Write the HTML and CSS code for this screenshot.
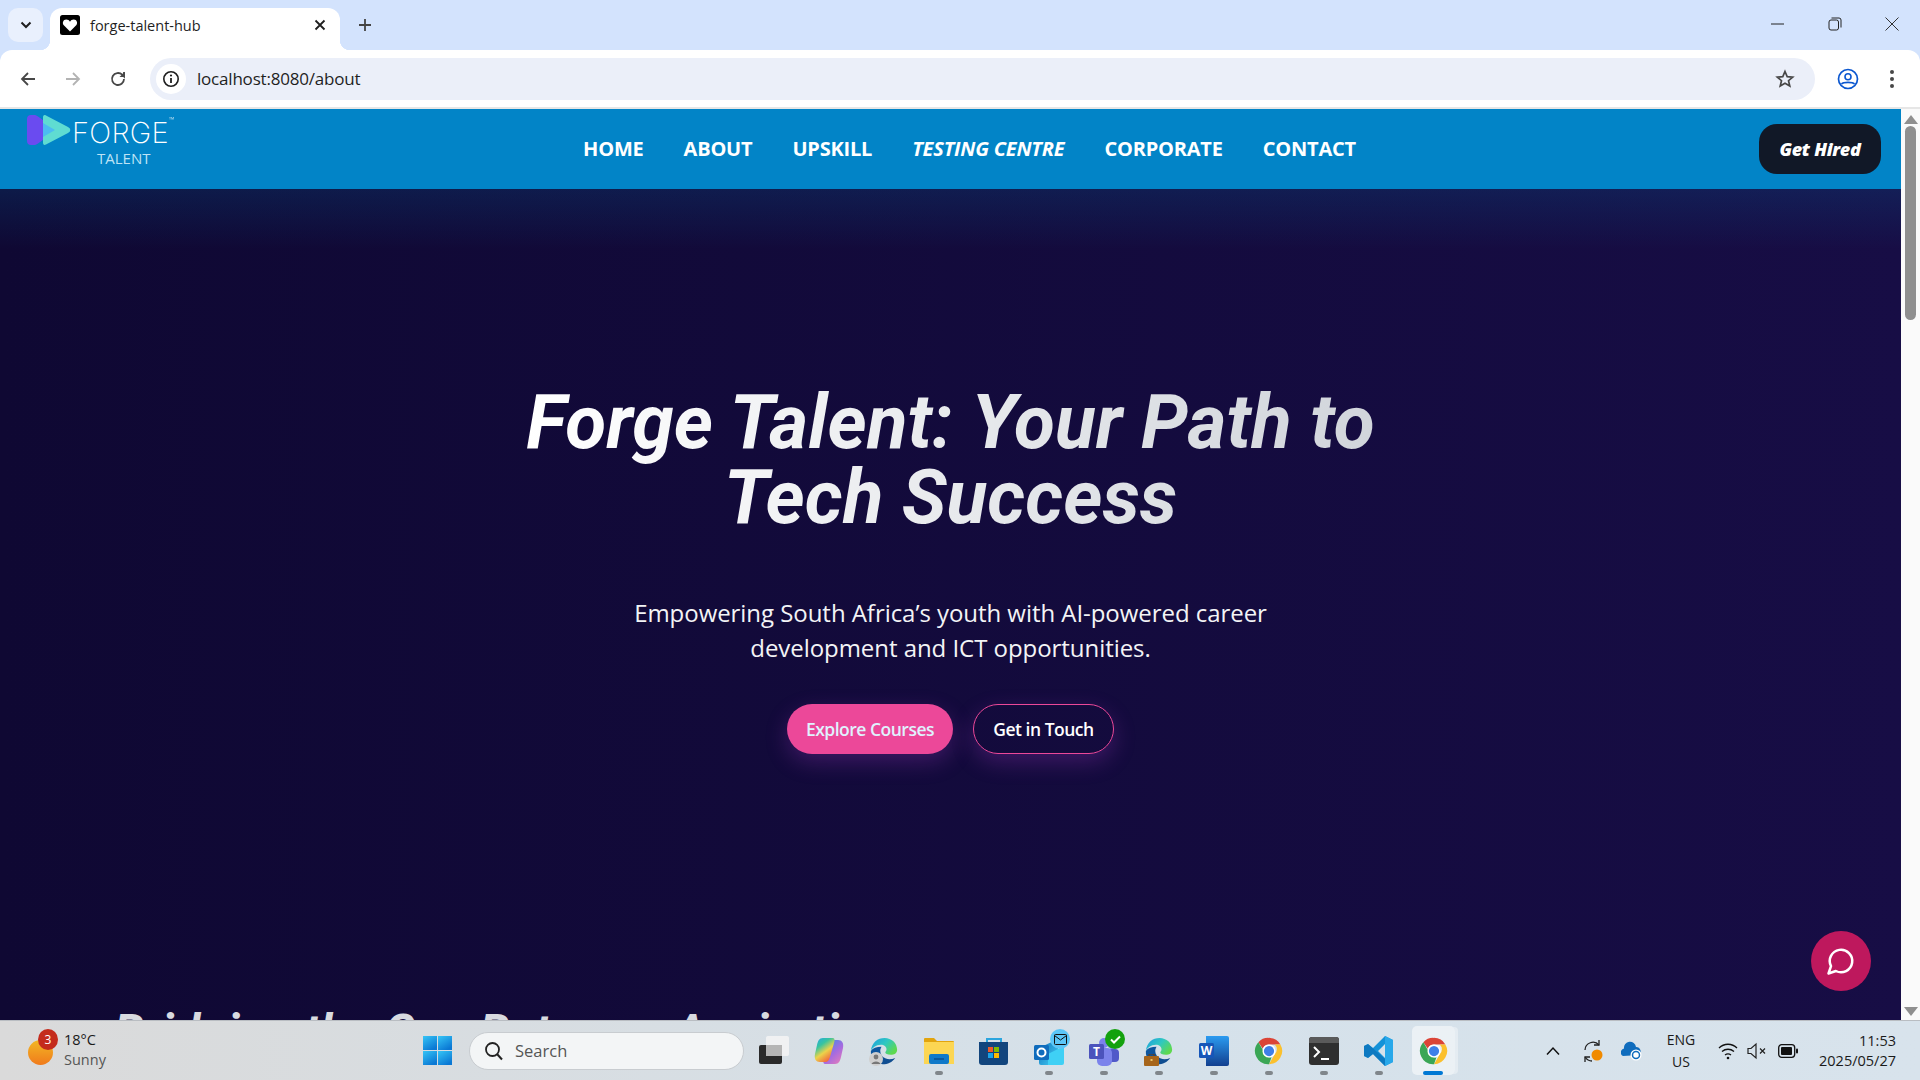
FILE: index.html
```html
<!DOCTYPE html>
<html lang="en">
<head>
    <meta charset="UTF-8">
    <meta name="viewport" content="width=device-width, initial-scale=1.0">
    <title>forge-talent-hub</title>
    <link rel="stylesheet" href="styles.css">
</head>
<body>
    <svg class="defs" width="0" height="0">
        <defs>
            <linearGradient id="edgeBlue" x1="0" y1="0" x2="1" y2="1"><stop offset="0" stop-color="#0c59a4"/><stop offset="1" stop-color="#114a8b"/></linearGradient>
            <linearGradient id="edgeTop" x1="0" y1="0" x2="1" y2="0.6"><stop offset="0" stop-color="#1b9de2"/><stop offset="0.55" stop-color="#30c8c0"/><stop offset="1" stop-color="#5ed94f"/></linearGradient>
            <linearGradient id="copilotA" x1="0" y1="0" x2="0.6" y2="1"><stop offset="0" stop-color="#25a5e8"/><stop offset="0.35" stop-color="#37c4a0"/><stop offset="0.65" stop-color="#ecd34a"/><stop offset="1" stop-color="#f2683c"/></linearGradient>
            <linearGradient id="copilotB" x1="0.2" y1="0" x2="1" y2="1"><stop offset="0" stop-color="#3b8ee8"/><stop offset="0.5" stop-color="#a56be0"/><stop offset="1" stop-color="#ef7fb4"/></linearGradient>
            <linearGradient id="winBlue" x1="0" y1="0" x2="0.6" y2="1"><stop offset="0" stop-color="#36c5f6"/><stop offset="1" stop-color="#0a78d4"/></linearGradient>
            <linearGradient id="outlookBlue" x1="0" y1="0" x2="1" y2="1"><stop offset="0" stop-color="#0c6ab8"/><stop offset="1" stop-color="#45d2f6"/></linearGradient>
            <linearGradient id="wordBlue" x1="0" y1="0" x2="0" y2="1"><stop offset="0" stop-color="#2b9bf0"/><stop offset="1" stop-color="#123f8f"/></linearGradient>
            <symbol id="chromeIcon" viewBox="0 0 48 48">
                <path d="M24 3a21 21 0 0 1 18.2 10.500H24a10.500 10.500 0 0 0-9.900 7L7 10A21 21 0 0 1 24 3z" fill="#db4437"/>
                <path d="M42.200 13.500A21 21 0 0 1 24 45l9.100-15.800a10.500 10.500 0 0 0 0-15.700z" fill="#fbc02d"/>
                <path d="M24 45A21 21 0 0 1 7 10l9 15.600a10.500 10.500 0 0 0 12 8.500z" fill="#3aa655"/>
                <circle cx="24" cy="24" r="10.500" fill="#fff"/>
                <circle cx="24" cy="24" r="8.200" fill="#3f7fe8"/>
            </symbol>
            <symbol id="edgeIcon" viewBox="0 0 48 48">
                <path d="M3 24C4 10 14 3 25 3c11 0 20 8 20 19 0 6-5 8-10 8-6 0-9-2-9-4 0-1 2-2 2-5 0-4-4-7-9-7-8 0-14 5-16 10z" fill="url(#edgeTop)"/>
                <path d="M3 24c-1 12 8 21 19 21 8 0 15-3 20-10-5 2-10 3-15 1-6-2-9-7-9-12 0-3 1-5 2-7-8 0-14 2-17 7z" fill="url(#edgeBlue)"/>
            </symbol>
        </defs>
    </svg>

    <!-- browser top -->
    <div class="tabstrip">
        <div class="tab-search">
            <svg width="14" height="14" viewBox="0 0 14 14"><path d="M2.500 4.500 7 9l4.500-4.500" fill="none" stroke="#1f1f1f" stroke-width="2"/></svg>
        </div>
        <div class="tab">
            <svg class="favicon" width="20" height="20" viewBox="0 0 20 20"><rect width="20" height="20" rx="2.500" fill="#000"/><path d="M10 16.500 3.800 10.300C2 8.300 3 4.500 6.300 4.500c1.600 0 2.900.9 3.700 2.200.8-1.300 2.100-2.200 3.700-2.200 3.300 0 4.300 3.800 2.500 5.800z" fill="#fff"/></svg>
            <span class="tab-title">forge-talent-hub</span>
            <svg class="tab-close" width="12" height="12" viewBox="0 0 12 12"><path d="M1.500 1.500l9 9m0-9-9 9" stroke="#1f1f1f" stroke-width="1.800"/></svg>
        </div>
        <svg class="tab-new" width="14" height="14" viewBox="0 0 14 14"><path d="M7 1v12M1 7h12" stroke="#444" stroke-width="1.800"/></svg>
        <div class="caption">
            <svg width="14" height="14" viewBox="0 0 14 14"><path d="M0 7h13" stroke="#222" stroke-width="1"/></svg>
            <svg width="14" height="14" viewBox="0 0 14 14"><rect x="1" y="3" width="9.500" height="10" rx="2" fill="none" stroke="#222"/><path d="M3.500 1h7.500a2 2 0 0 1 2 2v7.500" fill="none" stroke="#222"/></svg>
            <svg width="14" height="14" viewBox="0 0 14 14"><path d="M.5.500l13 13m0-13-13 13" stroke="#333" stroke-width="1"/></svg>
        </div>
    </div>
    <div class="toolbar">
        <svg class="tool" width="18" height="18" viewBox="0 0 18 18"><path d="M16 9H3M9 3 3 9l6 6" fill="none" stroke="#474747" stroke-width="1.800"/></svg>
        <svg class="tool" width="18" height="18" viewBox="0 0 18 18"><path d="M2 9h13M9 3l6 6-6 6" fill="none" stroke="#b3b3b3" stroke-width="1.800"/></svg>
        <svg class="tool" width="18" height="18" viewBox="0 0 18 18"><path d="M15 9a6 6 0 1 1-1.800-4.300L15 6.500V2" fill="none" stroke="#474747" stroke-width="1.800"/><path d="M15.800 7H10.500l5.300-5.300z" fill="#474747"/></svg>
        <div class="omnibox">
            <span class="site-info">
                <svg width="18" height="18" viewBox="0 0 18 18"><circle cx="9" cy="9" r="7.200" fill="none" stroke="#1f1f1f" stroke-width="1.600"/><path d="M9 8v5" stroke="#1f1f1f" stroke-width="1.800"/><circle cx="9" cy="5.500" r="1.100" fill="#1f1f1f"/></svg>
            </span>
            <span class="url">localhost:8080/about</span>
            <svg class="star" width="20" height="20" viewBox="0 0 20 20"><path d="M10 2.500l2.200 5.100 5.500.5-4.200 3.600 1.300 5.400L10 14.300l-4.800 2.800 1.300-5.400L2.300 8.100l5.500-.5z" fill="none" stroke="#474747" stroke-width="1.700"/></svg>
        </div>
        <svg class="profile" width="22" height="22" viewBox="0 0 22 22"><circle cx="11" cy="11" r="9.500" fill="none" stroke="#0b57d0" stroke-width="1.700"/><circle cx="11" cy="8.800" r="3" fill="none" stroke="#0b57d0" stroke-width="1.600"/><path d="M4.500 16c2-2.200 11-2.200 13 0" fill="none" stroke="#0b57d0" stroke-width="1.600"/></svg>
        <div class="kebab"><i></i><i></i><i></i></div>
    </div>

    <div class="viewport">
        <div class="page">
            <header class="site-nav">
                <a class="logo">
                    <span class="logo-top">
                        <svg class="logo-mark" width="44" height="30" viewBox="0 0 44 30"><path d="M4 0h3c1.500 0 3 .6 4 1.500l14 10c3 2 3 5 0 7L11 28.500c-1 .9-2.500 1.500-4 1.500H4c-2.500 0-4-1.500-4-4V4c0-2.500 1.500-4 4-4z" fill="#6a4bf0"/><path d="M19 .5c-2-1-3 0-3 2v25c0 2 1 3 3 2l22-11.500c3-1.500 3-4.500 0-6z" fill="#5fdcd2"/><path d="M16 8l12 7-12 7z" fill="#4cbcf2"/></svg>
                        <span class="logo-word">FORGE</span>
                        <span class="logo-tm">™</span>
                    </span>
                    <span class="logo-sub">TALENT</span>
                </a>
                <nav class="nav-links">
                    <a>HOME</a>
                    <a>ABOUT</a>
                    <a>UPSKILL</a>
                    <a class="nav-em">TESTING CENTRE</a>
                    <a>CORPORATE</a>
                    <a>CONTACT</a>
                </nav>
                <a class="btn-hired">Get Hired</a>
            </header>

            <section class="hero">
                <h1 class="hero-title">Forge Talent: Your Path to<br>Tech Success</h1>
                <p class="hero-sub">Empowering South Africa’s youth with AI-powered career development and ICT opportunities.</p>
                <div class="hero-actions">
                    <a class="btn btn-pink">Explore Courses</a>
                    <a class="btn btn-outline">Get in Touch</a>
                </div>
            </section>

            <section class="bridge">
                <h2 class="bridge-title">Bridging the Gap Between Aspirations</h2>
            </section>

            <button class="chat-btn">
                <svg width="30" height="30" viewBox="0 0 24 24"><path d="M7.900 20A9 9 0 1 0 4 16.100L2 22z" fill="none" stroke="#fff" stroke-width="2" stroke-linejoin="round"/></svg>
            </button>
        </div>
        <div class="scrollbar">
            <span class="arrow-up"></span>
            <span class="thumb"></span>
            <span class="arrow-down"></span>
        </div>
    </div>

    <!-- windows taskbar -->
    <footer class="taskbar">
        <div class="weather">
            <span class="sun"><b>3</b></span>
            <span class="weather-text"><span>18°C</span><span class="muted">Sunny</span></span>
        </div>
        <svg class="win" width="29" height="29" viewBox="0 0 29 29"><g fill="url(#winBlue)"><rect width="14" height="14"/><rect x="15" width="14" height="14"/><rect y="15" width="14" height="14"/><rect x="15" y="15" width="14" height="14"/></g></svg>
        <div class="search">
            <svg width="20" height="20" viewBox="0 0 20 20"><circle cx="8.500" cy="8.500" r="6.500" fill="none" stroke="#222" stroke-width="1.800"/><path d="M13 13l5 5.500" stroke="#222" stroke-width="2"/></svg>
            <span>Search</span>
        </div>
        <div class="apps">
            <div class="app">
                <svg width="30" height="30" viewBox="0 0 30 30"><rect x="0" y="9" width="23" height="19" rx="2" fill="#2a2a2a"/><rect x="7" y="0" width="23" height="20" rx="2" fill="#f5f5f5" opacity=".85"/><rect x="7" y="9" width="16" height="11" fill="#b5b5b5"/></svg>
            </div>
            <div class="app">
                <svg width="30" height="30" viewBox="0 0 30 30"><path d="M21 28c4 0 5-3 6-7l2-9c1-5-1-8-5-8h-5c-3 0-4 2-5 5l-4 14c-1 3-1 5 2 5z" fill="url(#copilotB)"/><path d="M9 2C5 2 4 5 3 9l-2 9c-1 5 1 8 5 8h5c3 0 4-2 5-5l4-14c1-3 1-5-2-5z" fill="url(#copilotA)"/></svg>
            </div>
            <div class="app">
                <svg width="30" height="30"><use href="#edgeIcon"/></svg>
                <svg class="app-mini" width="14" height="14" viewBox="0 0 14 14"><circle cx="7" cy="7" r="7" fill="#cfcfcf"/><circle cx="7" cy="5" r="2.400" fill="#777"/><path d="M2.500 12c1-3.500 8-3.500 9 0z" fill="#777"/></svg>
            </div>
            <div class="app has-dot">
                <svg width="30" height="30" viewBox="0 0 30 30"><path d="M0 3a1 1 0 0 1 1-1h9l3 3h16a1 1 0 0 1 1 1v3H0z" fill="#e2a40e"/><path d="M0 6h30v22H0z" fill="#fcd653"/><rect x="5" y="18" width="20" height="10" rx="2" fill="#1079c9"/><path d="M10 23h10" stroke="#0a4f8f" stroke-width="1.500"/></svg>
            </div>
            <div class="app">
                <svg width="30" height="30" viewBox="0 0 30 30"><path d="M8 6V3h14v3" fill="none" stroke="#2ca5de" stroke-width="2"/><path d="M0 6h29v20a3 3 0 0 1-3 3H3a3 3 0 0 1-3-3z" fill="#12457d"/><rect x="9" y="11" width="5" height="5" fill="#f05a28"/><rect x="15" y="11" width="5" height="5" fill="#7fba00"/><rect x="9" y="17" width="5" height="5" fill="#1aa3e8"/><rect x="15" y="17" width="5" height="5" fill="#ffb900"/></svg>
            </div>
            <div class="app has-dot">
                <svg width="30" height="30" viewBox="0 0 30 30"><path d="M5 12 24 3v26H7a2 2 0 0 1-2-2z" fill="url(#outlookBlue)"/><path d="M14 18l16-8v17a2 2 0 0 1-2 2H14z" fill="#3fd0f5"/><rect x="0" y="9" width="15" height="15" rx="1.500" fill="#0f6cbd"/><circle cx="7.500" cy="16.500" r="4" fill="none" stroke="#fff" stroke-width="2"/></svg>
                <span class="app-badge badge-mail">
                    <svg width="13" height="11" viewBox="0 0 13 11"><rect x=".5" y=".5" width="12" height="10" rx="1" fill="none" stroke="#111"/><path d="M.5 1.500 6.500 6l6-4.500" fill="none" stroke="#111"/></svg>
                </span>
            </div>
            <div class="app has-dot">
                <svg width="30" height="30" viewBox="0 0 30 30"><circle cx="23" cy="9" r="4" fill="#7b83eb"/><rect x="19" y="13" width="11" height="13" rx="4" fill="#5059c9"/><circle cx="15" cy="7" r="5" fill="#7b83eb"/><rect x="8" y="12" width="15" height="18" rx="5" fill="#7b83eb"/><rect x="0" y="8" width="15" height="15" rx="1.500" fill="#4b53bc"/><text class="app-letter" x="7.500" y="20">T</text></svg>
                <span class="app-badge badge-ok">
                    <svg width="11" height="9" viewBox="0 0 11 9"><path d="M1 4.500l3 3 6-6" fill="none" stroke="#fff" stroke-width="2"/></svg>
                </span>
            </div>
            <div class="app has-dot">
                <svg width="30" height="30"><use href="#edgeIcon"/></svg>
                <svg class="app-mini" width="15" height="12" viewBox="0 0 15 12"><rect y="2" width="15" height="10" rx="1" fill="#a6651b"/><path d="M5 2V0h5v2" fill="none" stroke="#6b3f10"/><rect x="6.500" y="5" width="2" height="2" fill="#e9c46a"/></svg>
            </div>
            <div class="app has-dot">
                <svg width="30" height="30" viewBox="0 0 30 30"><path d="M7 0h21a2 2 0 0 1 2 2v26a2 2 0 0 1-2 2H7z" fill="url(#wordBlue)"/><rect x="0" y="7" width="15" height="15" rx="1.500" fill="#1656b8"/><text class="app-letter" x="7.500" y="19">W</text></svg>
            </div>
            <div class="app has-dot">
                <svg width="30" height="30"><use href="#chromeIcon"/></svg>
            </div>
            <div class="app has-dot">
                <svg width="30" height="30" viewBox="0 0 30 30"><rect y="1" width="30" height="28" rx="3" fill="#2f2f2f"/><path d="M0 4a3 3 0 0 1 3-3h24a3 3 0 0 1 3 3v3H0z" fill="#5a5a5a"/><path d="M5 11l5 5-5 5" fill="none" stroke="#fff" stroke-width="2"/><path d="M12 23h8" stroke="#fff" stroke-width="2"/></svg>
            </div>
            <div class="app has-dot">
                <svg width="30" height="30" viewBox="0 0 30 30"><path d="M21 0l8 4v22l-8 4L9 18l-5 4-4-2v-10l4-2 5 4zm0 8-7 7 7 7z" fill="#1492d8"/><path d="M21 0l8 4v22l-8 4z" fill="#28a8ea"/><path d="M0 10l4-2 17 15v7L9 18l-5 4-4-2z" fill="#0a6fb8" opacity=".7"/></svg>
            </div>
            <div class="app app-active">
                <svg width="30" height="30"><use href="#chromeIcon"/></svg>
            </div>
        </div>
        <div class="tray">
            <svg width="16" height="10" viewBox="0 0 16 10"><path d="M2 8.500 8 2l6 6.500" fill="none" stroke="#111" stroke-width="1.500"/></svg>
            <svg class="tray-sync" width="22" height="26" viewBox="0 0 22 26"><path d="M3 12a8 8 0 0 1 14-5M19 14" fill="none" stroke="#222" stroke-width="1.300"/><path d="M17 2v5h-5M3 24v-5h5" fill="none" stroke="#222" stroke-width="1.300"/><path d="M3 19c2 3 5 4 7 4" fill="none" stroke="#222" stroke-width="1.300"/><circle cx="15" cy="17" r="5.500" fill="#f08a00"/></svg>
            <svg class="tray-cloud" width="22" height="20" viewBox="0 0 22 20"><path d="M2 15a4 4 0 0 1 1-7.500A6 6 0 0 1 15 6a4.500 4.500 0 0 1 3 8z" fill="#0f6cbd"/><circle cx="15" cy="14" r="5.500" fill="#fff"/><circle cx="15" cy="14" r="3.500" fill="none" stroke="#0f6cbd" stroke-width="1.500"/></svg>
            <div class="lang"><span>ENG</span><span>US</span></div>
            <svg class="tray-wifi" width="20" height="18" viewBox="0 0 20 18"><path d="M1 6c5-5 13-5 18 0M4 9.500c3.500-3 8.500-3 12 0M7 13c2-1.500 4-1.500 6 0" fill="none" stroke="#111" stroke-width="1.300"/><circle cx="10" cy="16" r="1.300" fill="#111"/></svg>
            <svg class="tray-vol" width="20" height="18" viewBox="0 0 20 18"><path d="M1 6.500h3L9 2v14l-5-4.500H1z" fill="none" stroke="#222" stroke-width="1.200"/><path d="M13 6.500l5 5m0-5-5 5" stroke="#222" stroke-width="1.200"/></svg>
            <svg class="tray-bat" width="20" height="14" viewBox="0 0 20 14"><rect x=".7" y=".7" width="16" height="12.600" rx="3" fill="none" stroke="#111" stroke-width="1.300"/><rect x="3" y="3" width="11" height="8" rx="1" fill="#111"/><rect x="18" y="4.500" width="2" height="5" rx="1" fill="#111"/></svg>
            <div class="clock"><span>11:53</span><span>2025/05/27</span></div>
        </div>
    </footer>
</body>
</html>
```

FILE: styles.css
```css
* {
    box-sizing: border-box;
}

html, body {
    margin: 0;
    padding: 0;
    height: 100%;
    overflow: hidden;
}

body {
    width: 1920px;
    height: 1080px;
    display: flex;
    flex-direction: column;
    font-family: "Open Sans", "Noto Sans", sans-serif;
    background-color: #d3e3fd;
}

.defs {
    position: absolute;
}

/* browser top */
.tabstrip {
    height: 50px;
    flex: none;
    display: flex;
    align-items: flex-end;
    background-color: #d3e3fd;
    padding-left: 8px;
}

.tab-search {
    width: 35px;
    height: 34px;
    margin-bottom: 8px;
    border-radius: 10px;
    background-color: #e9f0fd;
    display: flex;
    align-items: center;
    justify-content: center;
}

.tab {
    position: relative;
    width: 290px;
    height: 42px;
    margin-left: 7px;
    padding: 0 14px 8px 10px;
    border-radius: 12px 12px 0 0;
    background-color: #fff;
    display: flex;
    align-items: center;
}

.tab::before, .tab::after {
    content: "";
    position: absolute;
    bottom: 0;
    width: 10px;
    height: 10px;
}

.tab::before {
    left: -10px;
    background: radial-gradient(circle at 0 0, transparent 10px, #fff 10.5px);
}

.tab::after {
    right: -10px;
    background: radial-gradient(circle at 100% 0, transparent 10px, #fff 10.5px);
}

.favicon {
    flex: none;
}

.tab-title {
    margin-left: 10px;
    font-size: 14.5px;
    color: #1f1f1f;
}

.tab-close {
    margin-left: auto;
}

.tab-new {
    margin: 0 0 18px 18px;
}

.caption {
    margin-left: auto;
    height: 50px;
    width: 149px;
    padding: 0 21px 2px 0;
    display: flex;
    align-items: center;
    justify-content: space-between;
}

.toolbar {
    height: 59px;
    flex: none;
    display: flex;
    align-items: center;
    padding: 0 14px 0 19px;
    background-color: #fff;
    border-radius: 12px 12px 0 0;
    border-bottom: 2px solid #e6e6e6;
}

.tool {
    flex: none;
    margin-right: 27px;
}

.omnibox {
    width: 1665px;
    height: 42px;
    margin-left: -4px;
    padding: 0 20px 0 6px;
    border-radius: 21px;
    background-color: #ebeff9;
    display: flex;
    align-items: center;
}

.site-info {
    width: 30px;
    height: 30px;
    border-radius: 50%;
    background-color: #fff;
    display: flex;
    align-items: center;
    justify-content: center;
}

.url {
    margin-left: 11px;
    font-size: 17px;
    letter-spacing: -0.2px;
    color: #1f1f1f;
}

.star {
    margin-left: auto;
}

.profile {
    margin-left: 22px;
}

.kebab {
    margin-left: 31px;
    display: flex;
    flex-direction: column;
    gap: 3px;
}

.kebab i {
    width: 4px;
    height: 4px;
    border-radius: 50%;
    background-color: #474747;
}

/* page */
.viewport {
    flex: 1;
    min-height: 0;
    display: flex;
}

.page {
    position: relative;
    flex: 1;
    min-width: 0;
    overflow: hidden;
    background: linear-gradient(to right, #0f0833, #170d45);
}

.scrollbar {
    width: 19px;
    flex: none;
    padding-top: 6px;
    background-color: #fafafa;
    display: flex;
    flex-direction: column;
    align-items: center;
}

.arrow-up, .arrow-down {
    width: 0;
    height: 0;
    border-left: 7px solid transparent;
    border-right: 7px solid transparent;
}

.arrow-up {
    border-bottom: 9px solid #8f8f8f;
}

.arrow-down {
    margin-top: auto;
    margin-bottom: 4px;
    border-top: 9px solid #8f8f8f;
}

.thumb {
    width: 11px;
    height: 194px;
    margin-top: 2px;
    border-radius: 6px;
    background-color: #8f8f8f;
}

.site-nav {
    height: 80px;
    padding: 0 20px;
    display: flex;
    align-items: center;
    justify-content: space-between;
    background-color: #0284c7;
}

.logo {
    width: 160px;
    height: 80px;
    padding: 6px 0 0 7px;
    display: flex;
    flex-direction: column;
    color: #fff;
}

.logo-top {
    display: flex;
    align-items: flex-start;
}

.logo-mark {
    flex: none;
}

.logo-word {
    margin: 3px 0 0 1px;
    font-family: Inter, sans-serif;
    font-weight: 200;
    font-size: 29px;
    line-height: 30px;
    letter-spacing: 0.3px;
}

.logo-tm {
    font-size: 7px;
    line-height: 10px;
    opacity: .7;
}

.logo-sub {
    margin: 0 0 0 70px;
    font-family: "Open Sans", sans-serif;
    font-size: 15px;
    line-height: 20px;
    color: #bde3f6;
}

.nav-links {
    display: flex;
    gap: 40px;
    margin-bottom: 2px;
}

.nav-links a {
    font-size: 20px;
    font-weight: 700;
    letter-spacing: -0.2px;
    color: #fff;
}

.nav-links .nav-em {
    font-style: italic;
}

.btn-hired {
    width: 122px;
    height: 50px;
    border-radius: 18px;
    display: flex;
    align-items: center;
    justify-content: center;
    background-color: #111827;
    color: #fff;
    font-size: 18px;
    font-weight: 800;
    font-style: italic;
    letter-spacing: -0.3px;
}

.hero {
    padding-top: 196px;
    height: 790px;
    display: flex;
    flex-direction: column;
    align-items: center;
    background: linear-gradient(to bottom, rgba(3, 110, 170, .18), rgba(3, 110, 170, 0) 60px);
}

.hero-title {
    margin: 0;
    font-family: Roboto, sans-serif;
    font-size: 75px;
    font-weight: 700;
    font-style: italic;
    line-height: 75px;
    text-align: center;
    background: linear-gradient(to right, #fff, #d1d5db);
    -webkit-background-clip: text;
    background-clip: text;
    color: transparent;
}

.hero-sub {
    width: 672px;
    margin: 60px 0 0;
    font-size: 24px;
    line-height: 35px;
    letter-spacing: -0.05px;
    text-align: center;
    color: #f3f4f6;
}

.hero-actions {
    margin-top: 39px;
    display: flex;
    gap: 20px;
}

.btn {
    height: 50px;
    border-radius: 25px;
    display: flex;
    align-items: center;
    justify-content: center;
    font-size: 17.5px;
    font-weight: 600;
    letter-spacing: -0.5px;
    box-shadow: 0 8px 22px rgba(168, 60, 200, .28);
}

.btn-pink {
    width: 166px;
    background-color: #ec4899;
    color: #e0f2fe;
}

.btn-outline {
    width: 141px;
    border: 1px solid #ec4899;
    color: #fff;
}

.bridge {
    padding-left: 114px;
}

.bridge-title {
    margin: 0;
    padding-top: 25px;
    font-family: Roboto, sans-serif;
    font-size: 48px;
    font-weight: 700;
    font-style: italic;
    line-height: 56px;
    letter-spacing: 0.2px;
    white-space: nowrap;
    color: #d8dae0;
}

.chat-btn {
    position: absolute;
    left: 1811px;
    top: 822px;
    width: 60px;
    height: 60px;
    padding: 0;
    border: 0;
    border-radius: 50%;
    background-color: #be185d;
    display: flex;
    align-items: center;
    justify-content: center;
}

/* taskbar */
.taskbar {
    position: relative;
    height: 60px;
    flex: none;
    display: flex;
    align-items: center;
    padding: 0 24px 0 28px;
    border-top: 1px solid #b9bdc2;
    background: linear-gradient(to right, #dadada, #d5e1ea 60%, #d8e3ec);
    color: #1a1a1a;
}

.weather {
    width: 395px;
    flex: none;
    display: flex;
    align-items: center;
    gap: 11px;
}

.sun {
    position: relative;
    width: 25px;
    height: 25px;
    margin-top: 4px;
    border-radius: 50%;
    background: linear-gradient(to bottom, #f2b824, #f07a1c);
}

.sun b {
    position: absolute;
    left: 10px;
    top: -11px;
    width: 20px;
    height: 21px;
    border-radius: 50%;
    background-color: #c42b1c;
    color: #fff;
    font-size: 12px;
    font-weight: 400;
    line-height: 21px;
    text-align: center;
}

.weather-text {
    display: flex;
    flex-direction: column;
    margin-top: -2px;
    font-size: 14.5px;
    line-height: 20px;
}

.muted {
    color: #555;
}

.win {
    flex: none;
}

.search {
    width: 275px;
    height: 38px;
    flex: none;
    margin-left: 17px;
    padding-left: 14px;
    border-radius: 19px;
    background-color: #f3f5f6;
    border: 1px solid #c8ccd0;
    display: flex;
    align-items: center;
    gap: 11px;
    font-size: 16.5px;
    color: #555;
}

.apps {
    display: flex;
    margin-left: 2px;
}

.app {
    position: relative;
    width: 55px;
    height: 59px;
    padding-top: 15px;
    display: flex;
    justify-content: center;
}

.app svg {
    display: block;
}

.has-dot::after, .app-active::after {
    content: "";
    position: absolute;
    left: 50%;
    bottom: 5px;
    width: 8px;
    height: 4px;
    margin-left: -4px;
    border-radius: 2px;
    background-color: #80868b;
}

.app-active::before {
    content: "";
    position: absolute;
    left: 6px;
    right: 6px;
    top: 5px;
    bottom: 5px;
    border-radius: 5px;
    background-color: rgba(255, 255, 255, .5);
    box-shadow: 4px 0 0 -1px rgba(255, 255, 255, .35);
}

.app-active svg {
    position: relative;
}

.app-active::after {
    left: 17px;
    width: 20px;
    margin-left: 0;
    bottom: 5px;
    background-color: #0078d4;
}

.app-letter {
    font-family: "Open Sans", sans-serif;
    font-size: 12px;
    font-weight: 700;
    fill: #fff;
    text-anchor: middle;
}

.app svg.app-mini {
    position: absolute;
    left: 13px;
    bottom: 14px;
}

.app-badge {
    position: absolute;
    top: 8px;
    left: 29px;
    width: 20px;
    height: 20px;
    border-radius: 50%;
    display: flex;
    align-items: center;
    justify-content: center;
}

.badge-mail {
    background-color: #5cc6f7;
}

.badge-ok {
    background-color: #13a10e;
}

.tray {
    margin-left: auto;
    display: flex;
    align-items: center;
}

.tray-sync {
    margin-left: 21px;
}

.tray-cloud {
    margin-left: 17px;
}

.lang {
    width: 30px;
    margin-left: 23px;
    display: flex;
    flex-direction: column;
    align-items: center;
    font-size: 14px;
    line-height: 22px;
}

.tray-wifi {
    margin-left: 22px;
}

.tray-vol {
    margin-left: 9px;
}

.tray-bat {
    margin-left: 11px;
}

.clock {
    width: 92px;
    margin-left: 6px;
    display: flex;
    flex-direction: column;
    align-items: flex-end;
    font-size: 14.5px;
    line-height: 20px;
}
```
